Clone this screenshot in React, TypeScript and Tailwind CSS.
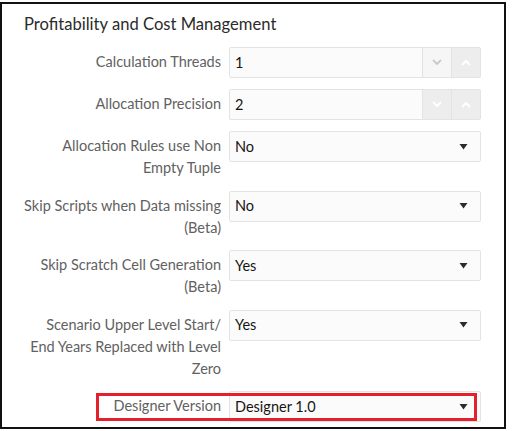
import React from 'react';

// Profitability and Cost Management settings panel

type Row = {
  label: React.ReactNode;
  value: string;
  kind: 'number' | 'select';
  downDisabled?: boolean;
  highlight?: boolean;
};

const rows: Row[] = [
  { label: 'Calculation Threads', value: '1', kind: 'number', downDisabled: true },
  { label: 'Allocation Precision', value: '2', kind: 'number' },
  {
    label: (
      <>
        Allocation Rules use Non
        <br />
        Empty Tuple
      </>
    ),
    value: 'No',
    kind: 'select',
  },
  {
    label: (
      <>
        Skip Scripts when Data missing
        <br />
        (Beta)
      </>
    ),
    value: 'No',
    kind: 'select',
  },
  {
    label: (
      <>
        Skip Scratch Cell Generation
        <br />
        (Beta)
      </>
    ),
    value: 'Yes',
    kind: 'select',
  },
  {
    label: (
      <>
        Scenario Upper Level Start/
        <br />
        End Years Replaced with Level
        <br />
        Zero
      </>
    ),
    value: 'Yes',
    kind: 'select',
  },
  { label: 'Designer Version', value: 'Designer 1.0', kind: 'select', highlight: true },
];

function Chevron({ up, color }: { up?: boolean; color: string }) {
  return (
    <svg width="10" height="7" viewBox="0 0 10 7" fill="none">
      <path
        d={up ? 'M1.5 5.5 L5 2 L8.5 5.5' : 'M1.5 1.5 L5 5 L8.5 1.5'}
        stroke={color}
        strokeWidth="1.8"
        strokeLinecap="round"
        strokeLinejoin="round"
      />
    </svg>
  );
}

function Field({ row }: { row: Row }) {
  return (
    <div className="flex h-[31px] w-[252px] items-stretch rounded-[2px] border border-[#e3e3e3] bg-[#fbfbfb] text-[14.5px] text-[#161513]">
      <div className="flex flex-1 items-center pl-[5px]">{row.value}</div>
      {row.kind === 'number' ? (
        <>
          <div
            className={
              row.downDisabled
                ? 'flex w-[29px] items-center justify-center border-l border-[#e3e3e3] bg-[#f6f6f6]'
                : 'flex w-[29px] items-center justify-center border-l border-[#e3e3e3] bg-[#ededed]'
            }
          >
            <Chevron color={row.downDisabled ? '#c9c9c9' : '#ffffff'} />
          </div>
          <div className="flex w-[29px] items-center justify-center border-l border-[#e3e3e3] bg-[#ededed]">
            <Chevron up color="#ffffff" />
          </div>
        </>
      ) : (
        <div className="flex w-[28px] items-center justify-start pl-[7px]">
          <svg width="9" height="6" viewBox="0 0 9 6">
            <path d="M0.5 0 H8.5 L4.5 5.5 Z" fill="#2b2b2b" />
          </svg>
        </div>
      )}
    </div>
  );
}

export default function App() {
  return (
    <div className="bg-white pt-[2px]" style={{ fontFamily: 'Lato, "Noto Sans", sans-serif' }}>
      <div className="h-[427px] w-[506px] border-2 border-[#111]">
        <h2 className="pl-[22px] pt-[8px] text-[16.6px] leading-[24px] text-[#2b2b2b]">
          Profitability and Cost Management
        </h2>
        <div className="mt-[11px] flex flex-col gap-[11px] pl-[19px]">
          {rows.map((row, i) => (
            <div key={i} className="relative flex items-start gap-[8px]">
              <div className="w-[200px] pt-[4px] text-right text-[14.5px] leading-[22.25px] text-[#616161]">
                {row.label}
              </div>
              <Field row={row} />
              {row.highlight && (
                <div className="pointer-events-none absolute left-[75px] top-[2px] h-[28px] w-[381px] border-[3px] border-[#e4202c]" />
              )}
            </div>
          ))}
        </div>
      </div>
    </div>
  );
}
